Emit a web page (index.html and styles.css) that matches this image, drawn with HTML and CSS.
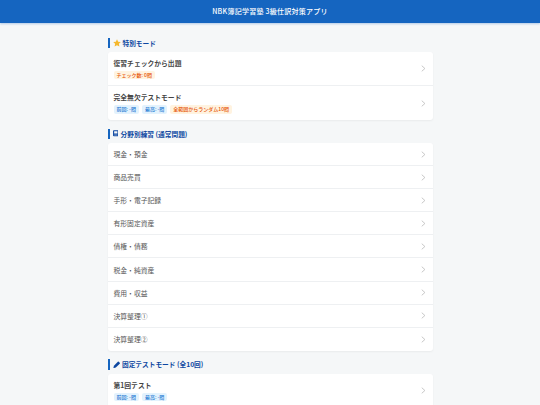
FILE: index.html
```html
<!DOCTYPE html>
<html lang="ja">
<head>
    <meta charset="UTF-8">
    <meta name="viewport" content="width=device-width, initial-scale=1.0">
    <title>NBK簿記学習塾 3級仕訳対策アプリ</title>
    <link rel="stylesheet" href="styles.css">
</head>
<body>
    <header class="app-header">NBK簿記学習塾 3級仕訳対策アプリ</header>

    <main class="container">
        <h2 class="section-title">
            <svg class="icon icon-star" viewBox="0 0 24 24"><path fill="#f5b82e" d="M12 .5l3.500 7.500 8 1-5.800 5.500 1.500 8.200-7.200-4-7.200 4 1.500-8.200L.5 9l8-1z"/></svg>
            特別モード
        </h2>
        <div class="card">
            <a class="row row-tall">
                <div class="row-body">
                    <div class="row-name">復習チェックから出題</div>
                    <div class="badges">
                        <span class="badge badge-orange">チェック数: 0問</span>
                    </div>
                </div>
                <svg class="chevron" viewBox="0 0 10 10"><path d="M2.500 1l4.500 4-4.500 4"/></svg>
            </a>
            <a class="row row-tall">
                <div class="row-body">
                    <div class="row-name">完全無欠テストモード</div>
                    <div class="badges">
                        <span class="badge badge-blue">前回: -問</span>
                        <span class="badge badge-blue">最高: -問</span>
                        <span class="badge badge-orange">全範囲からランダム10問</span>
                    </div>
                </div>
                <svg class="chevron" viewBox="0 0 10 10"><path d="M2.500 1l4.500 4-4.500 4"/></svg>
            </a>
        </div>

        <h2 class="section-title">
            <svg class="icon icon-book" viewBox="0 0 20 24"><path fill="#0d47a1" d="M3 1h14a3 3 0 0 1 3 3v16a3 3 0 0 1-3 3H3a3 3 0 0 1-3-3V4a3 3 0 0 1 3-3zm1 4v8h12V5zm0 12v2h12v-2z"/></svg>
            分野別練習 (通常問題)
        </h2>
        <div class="card">
            <a class="row"><div class="row-text">現金・預金</div><svg class="chevron" viewBox="0 0 10 10"><path d="M2.500 1l4.500 4-4.500 4"/></svg></a>
            <a class="row"><div class="row-text">商品売買</div><svg class="chevron" viewBox="0 0 10 10"><path d="M2.500 1l4.500 4-4.500 4"/></svg></a>
            <a class="row"><div class="row-text">手形・電子記録</div><svg class="chevron" viewBox="0 0 10 10"><path d="M2.500 1l4.500 4-4.500 4"/></svg></a>
            <a class="row"><div class="row-text">有形固定資産</div><svg class="chevron" viewBox="0 0 10 10"><path d="M2.500 1l4.500 4-4.500 4"/></svg></a>
            <a class="row"><div class="row-text">債権・債務</div><svg class="chevron" viewBox="0 0 10 10"><path d="M2.500 1l4.500 4-4.500 4"/></svg></a>
            <a class="row"><div class="row-text">税金・純資産</div><svg class="chevron" viewBox="0 0 10 10"><path d="M2.500 1l4.500 4-4.500 4"/></svg></a>
            <a class="row"><div class="row-text">費用・収益</div><svg class="chevron" viewBox="0 0 10 10"><path d="M2.500 1l4.500 4-4.500 4"/></svg></a>
            <a class="row"><div class="row-text">決算整理①</div><svg class="chevron" viewBox="0 0 10 10"><path d="M2.500 1l4.500 4-4.500 4"/></svg></a>
            <a class="row"><div class="row-text">決算整理②</div><svg class="chevron" viewBox="0 0 10 10"><path d="M2.500 1l4.500 4-4.500 4"/></svg></a>
        </div>

        <h2 class="section-title">
            <svg class="icon" viewBox="0 0 24 24"><path fill="#0d47a1" d="M1 23l2-8L15.500 2.500a2 2 0 0 1 2.800 0l3.200 3.200a2 2 0 0 1 0 2.800L9 21z"/></svg>
            固定テストモード (全10回)
        </h2>
        <div class="card">
            <a class="row row-tall">
                <div class="row-body">
                    <div class="row-name">第1回テスト</div>
                    <div class="badges">
                        <span class="badge badge-blue">前回: -問</span>
                        <span class="badge badge-blue">最高: -問</span>
                    </div>
                </div>
                <svg class="chevron" viewBox="0 0 10 10"><path d="M2.500 1l4.500 4-4.500 4"/></svg>
            </a>
        </div>
    </main>
</body>
</html>
```

FILE: styles.css
```css
html, body {
    height: 405px;
    overflow: hidden;
}

body {
    margin: 0;
    background-color: #f5f7f8;
    color: #333;
    font-family: "Noto Sans CJK JP", "Noto Sans", sans-serif;
}

.app-header {
    height: 22.5px;
    line-height: 22.5px;
    background-color: #1565c0;
    color: #fff;
    font-size: 7px;
    font-weight: 500;
    text-align: center;
    letter-spacing: 0.25px;
    box-shadow: 0 1px 2px rgba(21, 101, 192, 0.3);
}

.container {
    width: 325px;
    margin: 0 auto;
    padding-top: 15px;
}

.section-title {
    display: flex;
    align-items: center;
    gap: 2px;
    height: 10.5px;
    margin: 0 0 4px;
    padding-left: 3px;
    border-left: 2px solid #1565c0;
    color: #0d47a1;
    font-size: 6.7px;
    font-weight: 700;
    line-height: 10.5px;
}

.icon {
    width: 7.5px;
    height: 7.5px;
    flex-shrink: 0;
}

.icon-star {
    width: 8px;
    height: 8px;
}

.icon-book {
    width: 5.6px;
    height: 6.6px;
    margin-right: 0.5px;
}

.card {
    margin-bottom: 8.5px;
    background-color: #fff;
    border-radius: 3px;
    box-shadow: 0 1px 2px rgba(0, 0, 0, 0.05);
    overflow: hidden;
}

.row {
    display: flex;
    align-items: center;
    justify-content: space-between;
    height: 23.1px;
    box-sizing: border-box;
    padding: 0 5.5px 0 6px;
    border-bottom: 1px solid #eef0f2;
}

.row:last-child {
    border-bottom: none;
}

.row-tall {
    height: 34px;
}

.row-text {
    color: #555;
    font-size: 6.8px;
}

.row-body {
    padding-bottom: 0.5px;
}

.row-name {
    color: #444;
    font-size: 6.8px;
    font-weight: 700;
    line-height: 11px;
}

.badges {
    display: flex;
    gap: 3px;
    margin-top: 2px;
}

.badge {
    padding: 0 3px;
    border-radius: 2px;
    font-size: 5px;
    font-weight: 500;
    line-height: 8.5px;
}

.badge-blue {
    background-color: #e3f2fd;
    color: #1976d2;
}

.badge-orange {
    background-color: #fff3e0;
    color: #e65100;
}

.chevron {
    width: 7px;
    height: 7px;
    flex-shrink: 0;
    fill: none;
    stroke: #bdbdbd;
    stroke-width: 1.2;
}
```
